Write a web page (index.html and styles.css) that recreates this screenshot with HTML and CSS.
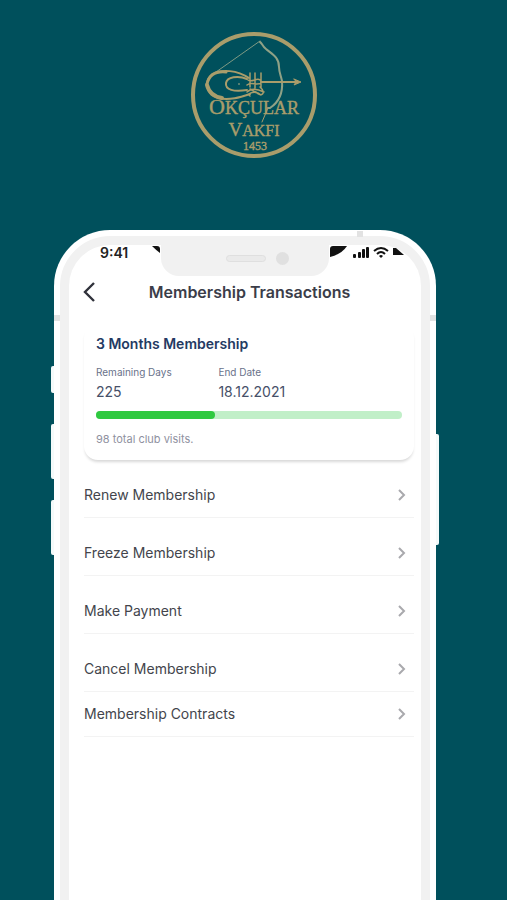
FILE: index.html
```html
<!DOCTYPE html>
<html lang="en">
<head>
  <meta charset="UTF-8">
  <meta name="viewport" content="width=device-width, initial-scale=1.0">
  <title>Membership Transactions</title>
  <link rel="stylesheet" href="styles.css">
</head>
<body>

<header class="brand">
  <svg class="logo" viewBox="0 0 126 126" role="img" aria-label="Okçular Vakfı 1453">
    <circle cx="63" cy="63" r="61" fill="none" stroke="#a99d6b" stroke-width="4"/>
    <!-- bow -->
    <g fill="none" stroke="#a99d6b" stroke-linecap="round">
      <path d="M25 40 L69 9" stroke="#7f9a84" stroke-width="1"/>
      <path d="M69 10 C71 11 71 14 75 17 C81 22 88 25 88 35 C88 40 90 44 91 49 C92 61 88 70 79 76 L77 76" stroke="#8fa186" stroke-width="2"/>
      <path d="M77 76 L71 90" stroke-width="1"/>
      <path d="M70 50 H107" stroke-width="2"/>
      <path d="M103 47 L110 50 L103 53 L105 50 Z" fill="#a99d6b" stroke-width="1"/>
      <!-- tughra -->
      <path d="M58 46 C46 38 31 37 22 42 C13 48 14 61 27 66 C38 69 50 65 59 62" stroke-width="2"/>
      <path d="M16 52 C18 43 25 39 35 40" stroke-width="3"/>
      <path d="M56 47 C47 43 36 45 35 51 C34 58 43 60 56 58" stroke-width="2"/>
      <path d="M16 53 C18 61 24 65 31 66" stroke-width="4"/>
      <path d="M59 41 V55 M64 41 V56 M70 41 V56 M57 48 C61 51 66 45 69 48 M56 53 C61 49 66 55 72 50 M56 60 C61 55 67 57 73 60 M59 64 C55 61 65 58 70 63 M59 57 L70 63 M69 55 C76 61 70 66 65 60" stroke-width="1.5"/>
    </g>
    <circle cx="48" cy="52" r="1" fill="#6f8c79"/>
    <g class="logo-text">
      <text x="63" y="82"><tspan font-size="22">O</tspan><tspan font-size="18">KÇULAR</tspan></text>
      <text x="63" y="104"><tspan font-size="19">V</tspan><tspan font-size="16">AKFI</tspan></text>
      <text x="64" y="118" font-size="12">1453</text>
    </g>
  </svg>
</header>

<main class="phone">
  <span class="side-button mute"></span>
  <span class="side-button volume-up"></span>
  <span class="side-button volume-down"></span>
  <span class="side-button power"></span>
  <span class="antenna antenna-left"></span>
  <span class="antenna antenna-right"></span>
  <span class="antenna antenna-top"></span>

  <div class="bezel">
    <div class="screen">
      <div class="status-bar">
        <div class="status-left">
          <span class="time">9:41</span>
          <svg width="9" height="9" viewBox="0 0 9 9"><path d="M0 1 H5 Q8 1 8 4 V8 Q4 5 0 1 Z" fill="#111"/></svg>
        </div>
        <div class="notch">
          <span class="speaker"></span>
          <span class="camera"></span>
        </div>
        <div class="status-right">
          <svg width="76" height="13" viewBox="0 0 76 13" fill="#111">
            <path d="M1 4 Q1 1 4 1 H18 Q13 9 1 12 Z"/>
            <rect x="24" y="9" width="3" height="4" rx="1"/>
            <rect x="29" y="7" width="3" height="6" rx="1"/>
            <rect x="33" y="4" width="3" height="9" rx="1"/>
            <rect x="37" y="2" width="3" height="11" rx="1"/>
            <path d="M45 6 Q52 0 59 6" fill="none" stroke="#111" stroke-width="2"/>
            <path d="M48 9 Q52 5 56 9" fill="none" stroke="#111" stroke-width="2"/>
            <path d="M50 11 Q52 9 54 11 L52 13 Z"/>
            <path d="M64 3 H67 L75 10 H64 Z"/>
          </svg>
        </div>
      </div>

      <div class="title-bar">
        <button type="button" class="back" aria-label="Back">
          <svg width="14" height="22" viewBox="0 0 14 22"><path d="M12 2 L3 11 L12 20" fill="none" stroke="#30323b" stroke-width="2.4"/></svg>
        </button>
        <h1>Membership Transactions</h1>
      </div>

      <section class="card">
        <h2>3 Months Membership</h2>
        <dl class="details">
          <div>
            <dt>Remaining Days</dt>
            <dd>225</dd>
          </div>
          <div>
            <dt>End Date</dt>
            <dd>18.12.2021</dd>
          </div>
        </dl>
        <div class="progress"><div class="progress-value" style="width: 39%"></div></div>
        <p class="visits">98 total club visits.</p>
      </section>

      <nav class="menu">
        <a href="#renew">Renew Membership
          <svg class="chevron" viewBox="0 0 8 12"><path d="M1 1 L6 6 L1 11"/></svg>
        </a>
        <a href="#freeze">Freeze Membership
          <svg class="chevron" viewBox="0 0 8 12"><path d="M1 1 L6 6 L1 11"/></svg>
        </a>
        <a href="#payment">Make Payment
          <svg class="chevron" viewBox="0 0 8 12"><path d="M1 1 L6 6 L1 11"/></svg>
        </a>
        <a href="#cancel">Cancel Membership
          <svg class="chevron" viewBox="0 0 8 12"><path d="M1 1 L6 6 L1 11"/></svg>
        </a>
        <a href="#contracts" class="compact">Membership Contracts
          <svg class="chevron" viewBox="0 0 8 12"><path d="M1 1 L6 6 L1 11"/></svg>
        </a>
      </nav>
    </div>
  </div>
</main>

</body>
</html>
```
FILE: styles.css
```css
* {
  box-sizing: border-box;
}

body {
  display: flex;
  flex-direction: column;
  min-height: 100vh;
  margin: 0;
  background-color: #00505c;
  font-family: Inter, "Liberation Sans", sans-serif;
}

h1, h2, p, dl, dd {
  margin: 0;
}

.brand {
  display: flex;
  justify-content: center;
  padding: 32px 0 72px;
}

.logo {
  width: 126px;
  height: 126px;
}

.logo-text {
  font-family: "Liberation Serif", serif;
  fill: #a99d6b;
  stroke: #a99d6b;
  stroke-width: 0.4;
  text-anchor: middle;
}

/* phone frame */
.phone {
  position: relative;
  display: flex;
  flex: 1;
  margin: 0 71px 0 54px;
  padding: 6px 6px 0;
  background-color: #fff;
  border-radius: 56px 56px 0 0;
}

.bezel {
  display: flex;
  flex: 1;
  padding: 9px 9px 0;
  background-color: #f1f1f1;
  border-radius: 50px 50px 0 0;
}

.screen {
  flex: 1;
  background-color: #fff;
  border-radius: 41px 41px 0 0;
}

.side-button {
  position: absolute;
  left: -3px;
  width: 3px;
  height: 55px;
  background-color: #f4fafa;
  border-radius: 2px 0 0 2px;
}

.mute {
  top: 136px;
  height: 27px;
}

.volume-up {
  top: 194px;
}

.volume-down {
  top: 270px;
}

.power {
  top: 204px;
  right: -3px;
  left: auto;
  height: 111px;
  border-radius: 0 2px 2px 0;
}

.antenna {
  position: absolute;
  width: 6px;
  height: 6px;
  background-color: #e2e2e2;
}

.antenna-left {
  top: 85px;
  left: 0;
}

.antenna-right {
  top: 85px;
  right: 0;
}

.antenna-top {
  top: 1px;
  right: 73px;
}

/* status bar */
.status-bar {
  display: grid;
  grid-template-columns: 1fr 168px 1fr;
  height: 31px;
}

.status-left,
.status-right {
  display: flex;
  align-items: flex-start;
  min-width: 0;
}

.status-left {
  justify-content: space-between;
  padding-left: 31px;
}

.time {
  font-size: 14px;
  font-weight: 600;
  line-height: 16px;
  color: #222;
}

.notch {
  display: flex;
  align-items: center;
  justify-content: flex-end;
  gap: 10px;
  padding: 0 40px 5px 0;
  background-color: #f1f1f1;
  border-radius: 0 0 18px 18px;
}

.speaker {
  width: 40px;
  height: 7px;
  background-color: #eaeaea;
  border: 1px solid #dfdfdf;
  border-radius: 4px;
}

.camera {
  width: 13px;
  height: 13px;
  background-color: #e0e0e0;
  border-radius: 50%;
}

/* title */
.title-bar {
  display: grid;
  grid-template-columns: 20px 1fr 20px;
  align-items: center;
  padding: 4px 4px 0 13px;
}

.back {
  display: flex;
  padding: 0;
  background: none;
  border: none;
  cursor: pointer;
}

.title-bar h1 {
  font-size: 16px;
  font-weight: 600;
  line-height: 24px;
  color: #3b3d49;
  text-align: center;
}

/* membership card */
.card {
  margin: 20px 7px 0 15px;
  padding: 10px 12px 13px;
  border-radius: 14px;
  box-shadow: 0 3px 3px -1px #d8d8d8;
}

.card h2 {
  font-size: 14px;
  font-weight: 600;
  line-height: 20px;
  color: #243a63;
}

.details {
  display: grid;
  grid-template-columns: 2fr 3fr;
  padding-top: 8px;
}

.details dt {
  font-size: 10px;
  line-height: 20px;
  color: #69728a;
}

.details dd {
  font-size: 14px;
  line-height: 20px;
  color: #465068;
}

.progress {
  height: 8px;
  margin-top: 9px;
  background-color: #c1efc8;
  border-radius: 4px;
}

.progress-value {
  height: 100%;
  background-color: #2fc940;
  border-radius: 4px;
}

.visits {
  padding-top: 12px;
  font-size: 11px;
  line-height: 16px;
  color: #8f919f;
}

/* menu */
.menu {
  padding: 0 7px 0 15px;
}

.menu a {
  display: flex;
  align-items: center;
  justify-content: space-between;
  padding: 25px 8px 12px 0;
  border-bottom: 1px solid #f3f3f3;
  font-size: 14px;
  line-height: 20px;
  color: #43454c;
  text-decoration: none;
}

.menu .compact {
  padding-top: 12px;
}

.chevron {
  width: 8px;
  height: 12px;
  fill: none;
  stroke: #a9a9ad;
  stroke-width: 2;
}
```
